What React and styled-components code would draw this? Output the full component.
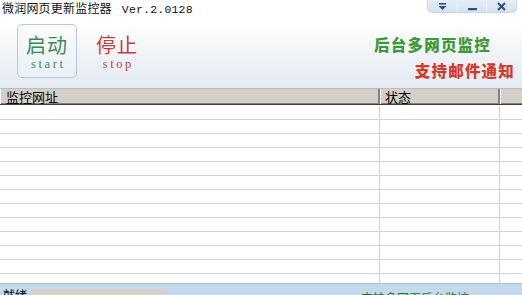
import styled, { createGlobalStyle } from "styled-components";

const Global = createGlobalStyle`
  html, body {
    margin: 0;
    padding: 0;
    background: #ffffff;
    overflow: hidden;
  }
  * { box-sizing: border-box; }
`;

const Window = styled.div`
  width: 522px;
  height: 295px;
  overflow: hidden;
  display: flex;
  flex-direction: column;
  font-family: "Noto Sans CJK SC", "Liberation Sans", sans-serif;
`;

// Parte de cima: título + barra de ferramentas com degradê
const Top = styled.div`
  height: 89px;
  flex-shrink: 0;
  background: linear-gradient(#ffffff 0%, #ffffff 25%, #f2f5f8 55%, #e3eaf2 100%);
  border-bottom: 1px solid #b8bec6;
  display: flex;
  flex-direction: column;
`;

const TitleBar = styled.div`
  height: 22px;
  display: flex;
  justify-content: space-between;
  align-items: flex-start;
  padding-left: 2px;
`;

const Title = styled.div`
  font-size: 12px;
  line-height: 16px;
  color: #111;
  letter-spacing: 0.2px;

  span {
    font-family: "Liberation Mono", monospace;
    font-size: 11.5px;
    margin-left: 10px;
  }
`;

const WinButtons = styled.div`
  margin-right: 5px;
  width: 90px;
  height: 13px;
  display: flex;
  background: linear-gradient(#e6eef6, #d5e2ee);
  border-radius: 0 0 5px 5px;
  border: 1px solid #c7d6e4;
  border-top: none;
`;

const WinBtn = styled.div`
  flex: 1;
  display: flex;
  align-items: center;
  justify-content: center;
  border-right: 1px solid #eef4fa;
  &:last-child { border-right: none; }
`;

const Toolbar = styled.div`
  flex: 1;
  display: flex;
  align-items: flex-start;
  padding: 3px 7px 0 17px;
`;

const ActionBtn = styled.div`
  width: ${(p) => p.$w}px;
  height: 54px;
  margin-right: 18px;
  border-radius: 5px;
  border: 1px solid ${(p) => (p.$active ? "#b4c8d6" : "transparent")};
  background: ${(p) =>
    p.$active ? "linear-gradient(#fbfcfd, #e9f0f5)" : "transparent"};
  display: flex;
  flex-direction: column;
  align-items: center;
  padding-top: 10px;
  color: ${(p) => p.$color};
`;

const ActionCn = styled.div`
  font-size: 20px;
  line-height: 20px;
  letter-spacing: 1px;
  white-space: nowrap;
`;

const ActionEn = styled.div`
  font-family: "Liberation Serif", serif;
  font-size: 12.5px;
  line-height: 13px;
  letter-spacing: 2.6px;
  margin-right: -2.6px;
  margin-top: 3px;
`;

const Slogans = styled.div`
  margin-left: auto;
  display: flex;
  flex-direction: column;
  align-items: flex-end;
  padding-top: 12px;
`;

const Slogan = styled.div`
  font-size: 15.5px;
  line-height: 17px;
  font-weight: 900;
  letter-spacing: 1.2px;
  color: ${(p) => p.$color};
  margin-right: ${(p) => p.$mr}px;
  margin-bottom: 9px;
`;

const Cols = "380px 120px 1fr";

const Header = styled.div`
  display: grid;
  grid-template-columns: ${Cols};
  height: 16px;
  flex-shrink: 0;
  background: #d4d0c8;
  border-bottom: 1px solid #404040;
  box-shadow: inset 0 -1px 0 #808080;
`;

const HeadCell = styled.div`
  font-size: 13px;
  line-height: 15px;
  color: #000;
  padding-left: ${(p) => p.$pl}px;
  border-left: 1px solid #ffffff;
  border-right: 2px solid #808080;
  &:last-child { border-right: none; }
`;

const Body = styled.div`
  flex: 1;
  overflow: hidden;
  padding-top: 1px;
  background: #ffffff;
`;

const Row = styled.div`
  display: grid;
  grid-template-columns: ${Cols};
  height: 14px;
  border-bottom: 1px solid #d2d2d2;
`;

const Cell = styled.div`
  border-right: 1px solid #d2d2d2;
  &:last-child { border-right: none; }
`;

const StatusBar = styled.div`
  height: 12px;
  flex-shrink: 0;
  background: #c4daec;
  border-top: 1px solid #a9c1d6;
  display: flex;
  align-items: flex-start;
  overflow: visible;
`;

const StatusText = styled.div`
  font-size: 12px;
  line-height: 14px;
  margin: 4px 0 0 3px;
  width: 27px;
  color: #000;
`;

const Progress = styled.div`
  width: 135px;
  height: 12px;
  margin-top: 5px;
  background: #d6d2ca;
`;

const StatusLink = styled.div`
  font-size: 12px;
  line-height: 14px;
  color: #1a7a1a;
  margin: 7px 0 0 196px;
`;

export default function App() {
  const rows = Array.from({ length: 13 });
  return (
    <Window>
      <Global />
      <Top>
        <TitleBar>
          <Title>
            微润网页更新监控器<span>Ver.2.0128</span>
          </Title>
          <WinButtons>
            <WinBtn>
              <svg width="11" height="9" viewBox="0 0 11 9">
                <rect x="2" y="1" width="7" height="1.6" fill="#2b4f86" />
                <path d="M1.5 4 L9.5 4 L5.5 8 Z" fill="#2b4f86" />
              </svg>
            </WinBtn>
            <WinBtn>
              <svg width="11" height="9" viewBox="0 0 11 9">
                <rect x="1" y="6" width="9" height="2.2" fill="#2b4f86" />
              </svg>
            </WinBtn>
            <WinBtn>
              <svg width="11" height="9" viewBox="0 0 11 9">
                <path d="M2 1 L9 8 M9 1 L2 8" stroke="#2b4f86" strokeWidth="2" />
              </svg>
            </WinBtn>
          </WinButtons>
        </TitleBar>
        <Toolbar>
          <ActionBtn $active $w={60} $color="#3a8a52">
            <ActionCn>启动</ActionCn>
            <ActionEn>start</ActionEn>
          </ActionBtn>
          <ActionBtn $w={44} $color="#c0403f">
            <ActionCn>停止</ActionCn>
            <ActionEn>stop</ActionEn>
          </ActionBtn>
          <Slogans>
            <Slogan $color="#3d9a3a" $mr={24}>后台多网页监控</Slogan>
            <Slogan $color="#d23a2c" $mr={0}>支持邮件通知</Slogan>
          </Slogans>
        </Toolbar>
      </Top>
      <Header>
        <HeadCell $pl={5}>监控网址</HeadCell>
        <HeadCell $pl={4}>状态</HeadCell>
        <HeadCell $pl={0} />
      </Header>
      <Body>
        {rows.map((_, i) => (
          <Row key={i}>
            <Cell />
            <Cell />
            <Cell />
          </Row>
        ))}
      </Body>
      <StatusBar>
        <StatusText>就绪</StatusText>
        <Progress />
        <StatusLink>支持多网页后台监控</StatusLink>
      </StatusBar>
    </Window>
  );
}
